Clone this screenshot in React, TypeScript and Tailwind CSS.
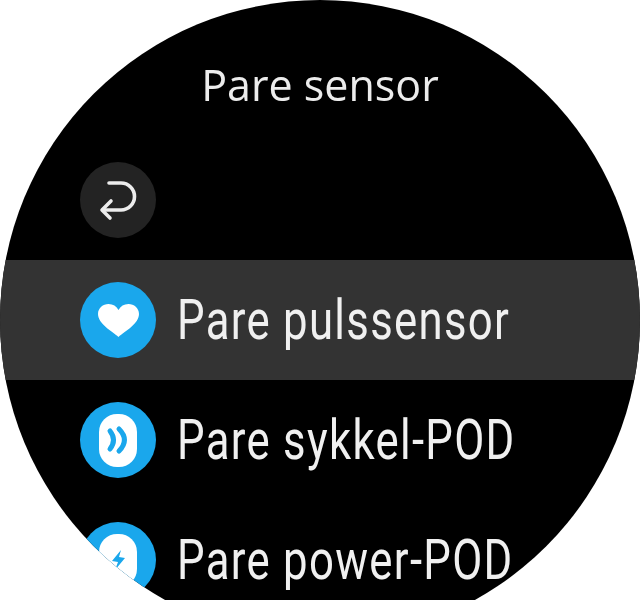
const Row = ({ label, icon, active }: { label: string; icon: React.ReactNode; active?: boolean }) => (
  <div className={`flex h-[120px] items-center pl-[80px] ${active ? "bg-[#333333]" : ""}`}>
    <div className="flex h-[76px] w-[76px] shrink-0 items-center justify-center rounded-full bg-[#1aa7ec]">{icon}</div>
    <span className="ml-[21px] origin-left scale-x-[0.78] whitespace-nowrap text-[56px] font-normal leading-none tracking-[1.7px] text-[#f0f0f0]" style={{ fontFamily: '"Roboto", sans-serif' }}>{label}</span>
  </div>
);

const Pod = ({ children }: { children: React.ReactNode }) => (
  <svg width="76" height="76" viewBox="0 0 76 76">
    <rect x="19" y="12" width="38" height="53" rx="18" fill="#fff" />
    {children}
  </svg>
);

export default function App() {
  return (
    <div className="h-[600px] w-[640px] overflow-hidden bg-white blur-[0.5px]">
      <div className="h-[640px] w-[640px] overflow-hidden rounded-full bg-black">
        <div className="flex h-[140px] items-center justify-center pt-[30px] text-[43px] text-[#ececec]" style={{ fontFamily: '"Open Sans", sans-serif' }}>Pare sensor</div>
        <div className="flex h-[120px] items-center pl-[80px]">
          <div className="flex h-[76px] w-[76px] items-center justify-center rounded-full bg-[#232323]">
            <svg width="76" height="76" viewBox="0 0 76 76" fill="none" stroke="#ececec" strokeWidth="3.6" strokeLinecap="round" strokeLinejoin="round">
              <path d="M29 21H41a13.5 13.5 0 0 1 0 27H23" />
              <path d="M31 39l-9 9 8 8" />
            </svg>
          </div>
        </div>
        <Row active label="Pare pulssensor" icon={
          <svg width="41" height="33" viewBox="0 0 41 33"><path d="M20.5 33C14 27 0 20 0 10 0 4 5 0 10.5 0 15 0 18.5 2 20.5 6 22.5 2 26 0 30.5 0 36 0 41 4 41 10 41 20 27 27 20.5 33z" fill="#fff" /></svg>
        } />
        <Row label="Pare sykkel-POD" icon={
          <Pod>
            <path d="M30 29Q37 38 30 47M39 27Q50 38 39 49" fill="none" stroke="#1aa7ec" strokeWidth="5" strokeLinecap="round" />
          </Pod>
        } />
        <Row label="Pare power-POD" icon={
          <Pod>
            <path d="M41 28l-9 11 6 1-3 8 10-12-6-1z" fill="#1aa7ec" />
          </Pod>
        } />
      </div>
    </div>
  );
}
